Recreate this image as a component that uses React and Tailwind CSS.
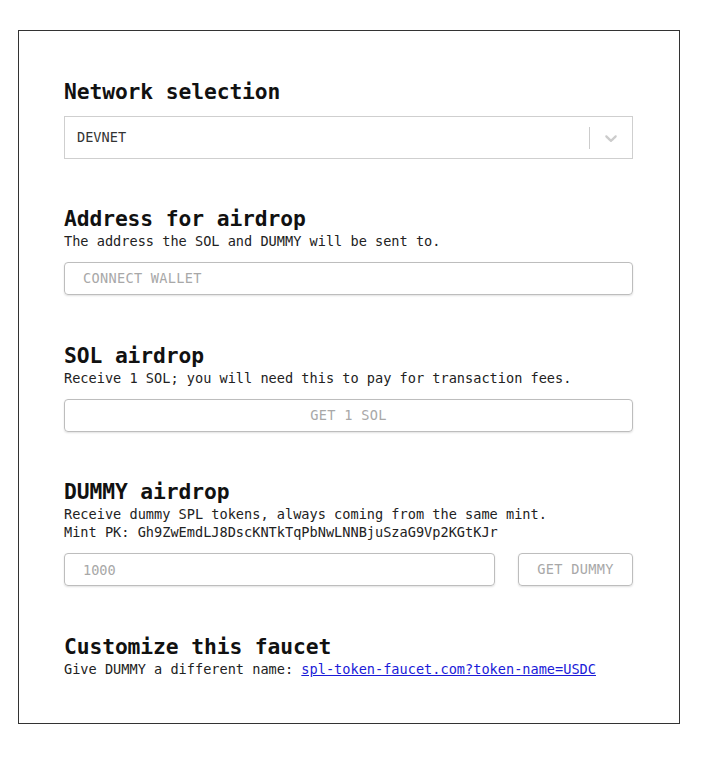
import React, { useState } from "react";

const mono = "font-['DejaVu_Sans_Mono','Liberation_Mono',monospace]";

const Heading = ({ children }) => (
  <h2 className="text-[21.3px] leading-[26px] font-bold text-[#111] tracking-[-0.1px]">
    {children}
  </h2>
);

const Sub = ({ children }) => (
  <p className="text-[13.6px] leading-[18px] text-[#222]">{children}</p>
);

const ChevronDown = () => (
  <svg width="20" height="20" viewBox="0 0 20 20" className="fill-[#cccccc]">
    <path d="M4.516 7.548c0.436-0.446 1.043-0.481 1.576 0l3.908 3.747 3.908-3.747c0.533-0.481 1.141-0.446 1.574 0 0.436 0.445 0.408 1.197 0 1.615-0.406 0.418-4.695 4.502-4.695 4.502-0.217 0.223-0.502 0.335-0.787 0.335s-0.57-0.112-0.789-0.335c0 0-4.287-4.084-4.695-4.502s-0.436-1.17 0-1.615z" />
  </svg>
);

export default function App() {
  const [amount, setAmount] = useState("");

  return (
    <div className={`${mono} bg-white min-h-[768px] pt-[30px] pl-[18px]`}>
      <div className="w-[662px] h-[694px] border border-[#333] pl-[45px] pr-[46px] pt-[48px]">
        {/* network */}
        <Heading>Network selection</Heading>
        <div className="mt-[11px] h-[43px] border border-[#cfcfcf] flex items-center">
          <span className="flex-1 pl-[12px] text-[13.6px] text-[#333]">DEVNET</span>
          <span className="w-px h-[22px] bg-[#cccccc]" />
          <span className="px-[11px] flex items-center">
            <ChevronDown />
          </span>
        </div>

        {/* wallet */}
        <div className="mt-[47px]">
          <Heading>Address for airdrop</Heading>
          <Sub>The address the SOL and DUMMY will be sent to.</Sub>
          <div className="mt-[12px] h-[33px] rounded-[4px] border border-[#bdbdbd] shadow-[0_1px_2px_rgba(0,0,0,0.12)] flex items-center pl-[18px] text-[13.6px] text-[#a8a8a8] tracking-[0.3px]">
            CONNECT WALLET
          </div>
        </div>

        {/* sol */}
        <div className="mt-[48px]">
          <Heading>SOL airdrop</Heading>
          <Sub>Receive 1 SOL; you will need this to pay for transaction fees.</Sub>
          <button className="mt-[12px] w-full h-[33px] rounded-[4px] border border-[#bdbdbd] shadow-[0_1px_2px_rgba(0,0,0,0.12)] text-[13.6px] text-[#a8a8a8] tracking-[0.3px]">
            GET 1 SOL
          </button>
        </div>

        {/* dummy token */}
        <div className="mt-[47px]">
          <Heading>DUMMY airdrop</Heading>
          <Sub>Receive dummy SPL tokens, always coming from the same mint.</Sub>
          <Sub>Mint PK: Gh9ZwEmdLJ8DscKNTkTqPbNwLNNBjuSzaG9Vp2KGtKJr</Sub>
          <div className="mt-[12px] flex gap-[23px]">
            <input
              value={amount}
              onChange={(e) => setAmount(e.target.value)}
              placeholder="1000"
              className="flex-1 h-[33px] rounded-[4px] border border-[#bdbdbd] shadow-[0_1px_2px_rgba(0,0,0,0.12)] pl-[18px] text-[13.6px] placeholder:text-[#a8a8a8] outline-none"
            />
            <button className="w-[115px] h-[33px] rounded-[4px] border border-[#bdbdbd] shadow-[0_1px_2px_rgba(0,0,0,0.12)] text-[13.6px] text-[#a8a8a8] tracking-[0.3px]">
              GET DUMMY
            </button>
          </div>
        </div>

        {/* customize */}
        <div className="mt-[48px]">
          <Heading>Customize this faucet</Heading>
          <Sub>
            Give DUMMY a different name:{" "}
            <a href="#" className="text-[#1b1bd8] underline">
              spl-token-faucet.com?token-name=USDC
            </a>
          </Sub>
        </div>
      </div>
    </div>
  );
}
